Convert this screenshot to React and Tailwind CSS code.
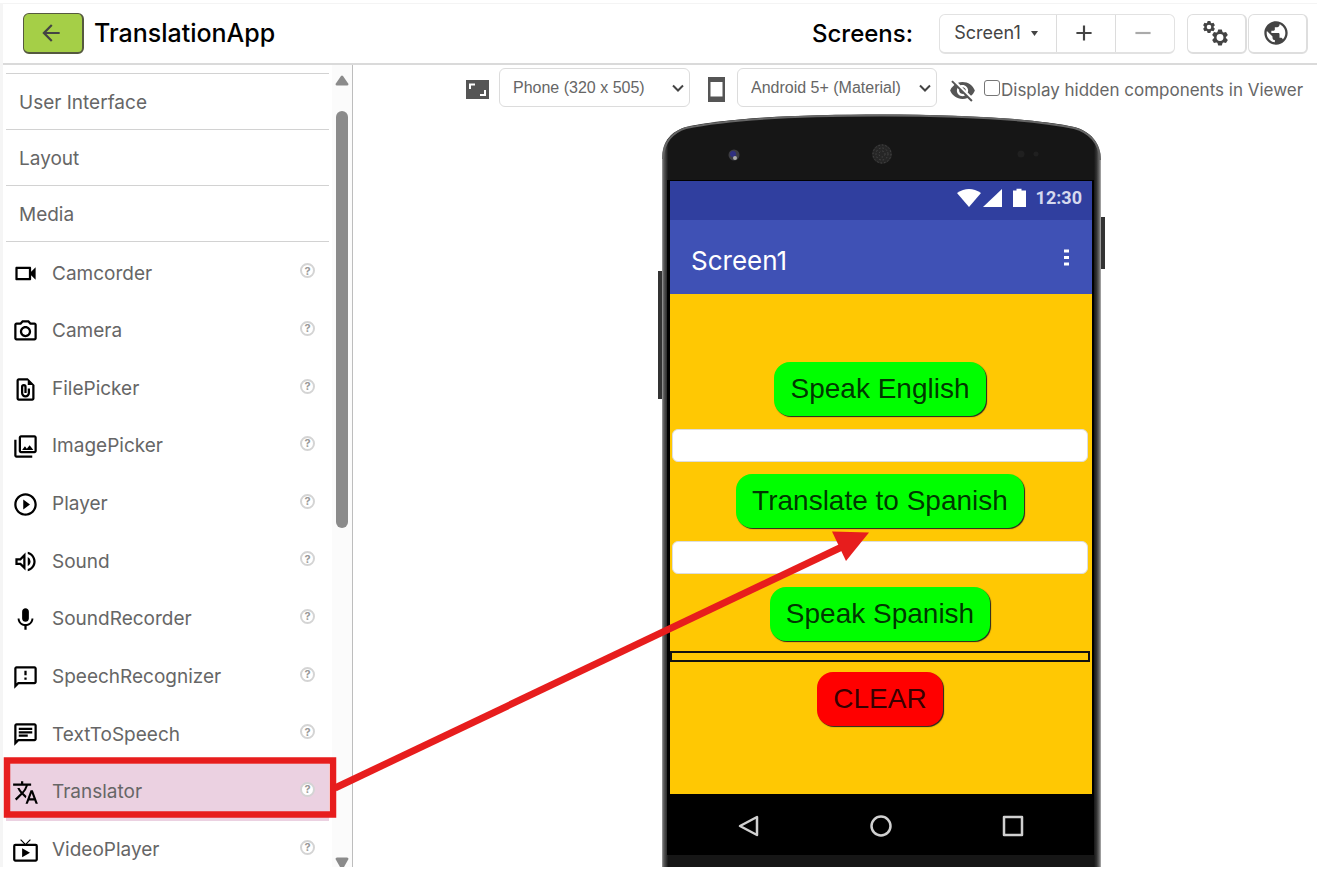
import React from "react";
import {
  MdArrowBack,
  MdPublic,
  MdVisibilityOff,
  MdOutlineVideocam,
  MdOutlinePhotoCamera,
  MdOutlineFilePresent,
  MdOutlinePhotoLibrary,
  MdPlayCircleOutline,
  MdOutlineVolumeUp,
  MdMic,
  MdOutlineFeedback,
  MdOutlineChat,
  MdTranslate,
  MdLiveTv,
  MdAdd,
  MdRemove,
} from "react-icons/md";

const categories = ["User Interface", "Layout", "Media"];

const components = [
  { name: "Camcorder", Icon: MdOutlineVideocam },
  { name: "Camera", Icon: MdOutlinePhotoCamera },
  { name: "FilePicker", Icon: MdOutlineFilePresent },
  { name: "ImagePicker", Icon: MdOutlinePhotoLibrary },
  { name: "Player", Icon: MdPlayCircleOutline },
  { name: "Sound", Icon: MdOutlineVolumeUp },
  { name: "SoundRecorder", Icon: MdMic },
  { name: "SpeechRecognizer", Icon: MdOutlineFeedback },
  { name: "TextToSpeech", Icon: MdOutlineChat },
  { name: "Translator", Icon: MdTranslate, selected: true },
  { name: "VideoPlayer", Icon: MdLiveTv },
];

function Gear({ x, y, r, hole }) {
  return (
    <g transform={`translate(${x} ${y})`}>
      <circle r={(r * 0.72 + hole) / 2} fill="none" stroke="currentColor" strokeWidth={r * 0.76 - hole} />
      {[0, 60, 120, 180, 240, 300].map((angle) => (
        <path
          key={angle}
          transform={`rotate(${angle}) scale(${r / 8})`}
          d="M-1.800 -8H1.800L2.800 -4.800H-2.800Z"
          fill="currentColor"
        />
      ))}
    </g>
  );
}

function Header() {
  return (
    <header className="flex h-[62px] shrink-0 items-center border-t border-b-2 border-t-[#f4f4f4] border-b-[#dadada] pr-[9px] pl-5">
      <button
        aria-label="Back"
        className="flex h-[41px] w-[61px] items-center justify-center rounded-md border border-r-2 border-b-2 border-[#55593f] bg-[#a5cf47] pb-px pr-1 text-[#444]"
      >
        <MdArrowBack size={26} />
      </button>
      <h1 className="ml-[10px] text-[25px] font-medium text-black">TranslationApp</h1>
      <span className="mr-[26px] ml-auto text-2xl font-medium text-black">Screens:</span>
      <div className="flex h-10 rounded-md border border-b-2 border-[#e2e2e2] text-[#444]">
        <button className="flex w-[117px] items-center justify-center gap-[10px] border-r border-[#dcdcdc] pr-1 text-lg">
          Screen1
          <svg width="7" height="5" viewBox="0 0 7 5" fill="currentColor" aria-hidden="true">
            <path d="M0 0h7L3.500 5z" />
          </svg>
        </button>
        <button
          aria-label="Add screen"
          className="flex w-[59px] items-center justify-center border-r border-[#dcdcdc] pr-1"
        >
          <MdAdd size={26} />
        </button>
        <button aria-label="Remove screen" className="flex w-[58px] items-center justify-center pr-1 text-[#aaa]">
          <MdRemove size={26} />
        </button>
      </div>
      <button
        aria-label="Project settings"
        className="ml-3 flex h-10 w-[60px] items-center justify-center rounded-md border border-r-2 border-b-2 border-[#dedede] pr-1 text-[#444]"
      >
        <svg width="26" height="26" viewBox="0 0 26 26" aria-hidden="true">
          <Gear x={7} y={7} r={6} hole={2.4} />
          <Gear x={18} y={17.5} r={8} hole={3.6} />
        </svg>
      </button>
      <button
        aria-label="Language"
        className="ml-px flex h-10 w-[60px] items-center justify-center rounded-md border border-r-2 border-b-2 border-[#dedede] pr-1 text-[#444]"
      >
        <MdPublic size={28} />
      </button>
    </header>
  );
}

function Palette() {
  return (
    <aside className="relative flex w-[350px] shrink-0 overflow-hidden border-r border-[#bdbdbd]">
      <div className="ml-[3px] w-[323px] shrink-0 pt-2">
        {categories.map((name) => (
          <button
            key={name}
            className="flex h-14 w-full items-center border-t border-[#d2d2d2] px-[13px] pt-1 text-left text-[19px] text-[#666]"
          >
            {name}
          </button>
        ))}
        <ul className="grid h-[638px] auto-rows-fr border-t border-[#d2d2d2] pt-[3px]">
          {components.map(({ name, Icon, selected }) => (
            <li key={name} className={selected ? "flex items-center bg-[#ebd1e1]" : "flex items-center"}>
              <button className="flex flex-1 items-center gap-[13px] pl-[6px] text-left text-[19px] text-[#666]">
                <Icon size={27} className="text-black" aria-hidden="true" />
                {name}
              </button>
              <button
                aria-label={"Help for " + name}
                className="mr-[14px] mb-[6px] flex size-[15px] items-center justify-center rounded-full border-2 border-[#d4d4d4] bg-white text-[11px] font-bold text-[#999]"
              >
                ?
              </button>
            </li>
          ))}
        </ul>
      </div>
      <div className="ml-[3px] flex flex-1 flex-col items-center bg-[#fbfbfb] pt-[10px]" aria-hidden="true">
        <svg width="14" height="11" viewBox="0 0 14 11" fill="#8b8b8b">
          <path d="M6 1Q7 0 8 1L13.500 9Q13.500 10.500 12 10.500H2Q.5 10.500.5 9Z" />
        </svg>
        <div className="mt-[25px] h-[417px] w-3 shrink-0 rounded-full bg-[#8b8b8b]" />
        <svg className="mt-auto" width="14" height="10" viewBox="0 0 14 10" fill="#8b8b8b">
          <path d="M.5 2Q.5.5 2 .5H12Q13.500.5 13.500 2L9 10H5Z" />
        </svg>
      </div>
    </aside>
  );
}

function SelectBox({ label, value, className }) {
  return (
    <div className={"relative " + className}>
      <select
        aria-label={label}
        className="h-[39px] w-full appearance-none rounded-md border border-[#dcdcdc] bg-white pr-8 pl-[13px] font-['Liberation_Sans',sans-serif] text-base text-[#666]"
      >
        <option>{value}</option>
      </select>
      <svg
        className="pointer-events-none absolute top-4 right-[6px]"
        width="12"
        height="9"
        viewBox="0 0 12 9"
        fill="none"
        stroke="#444"
        strokeWidth="2"
        aria-hidden="true"
      >
        <path d="M1 1.500l5 5 5-5" />
      </svg>
    </div>
  );
}

function ViewerToolbar() {
  return (
    <div className="flex h-[45px] items-center pl-[113px] text-[#555]">
      <svg className="mt-[3px] shrink-0" width="23" height="19" viewBox="0 0 23 19" aria-hidden="true">
        <path d="M0 0h23v19H0z" fill="#555" />
        <path d="M4 9V4.500h5M19 10v5h-5" fill="none" stroke="#fff" strokeWidth="2" />
      </svg>
      <SelectBox label="Screen size" value="Phone (320 x 505)" className="ml-[10px] w-[191px] shrink-0" />
      <svg className="mt-[3px] ml-[18px] shrink-0" width="17" height="25" viewBox="0 0 17 25" aria-hidden="true">
        <path fillRule="evenodd" d="M0 0h17v25H0zM2.500 5v14.500h12V5z" fill="#555" />
      </svg>
      <SelectBox label="Theme" value="Android 5+ (Material)" className="ml-3 w-[200px] shrink-0" />
      <MdVisibilityOff size={27} className="mt-[5px] ml-3 shrink-0" aria-hidden="true" />
      <input
        id="show-hidden"
        type="checkbox"
        className="ml-2 size-4 shrink-0 appearance-none rounded-[3px] border border-[#767676] bg-white"
      />
      <label htmlFor="show-hidden" className="mt-[6px] ml-px whitespace-nowrap text-[17px] text-[#666]">
        Display hidden components in Viewer
      </label>
    </div>
  );
}

function PhoneShell() {
  return (
    <svg className="absolute top-0 left-0" width="448" height="760" viewBox="0 0 448 760" aria-hidden="true">
      <defs>
        <linearGradient id="edge" x1="0" x2="1" y1="0" y2="0">
          <stop offset="0" stopColor="#a0a0a0" />
          <stop offset="0.004" stopColor="#5a5a5a" />
          <stop offset="0.01" stopColor="#333" />
          <stop offset="0.014" stopColor="#161616" />
          <stop offset="0.984" stopColor="#161616" />
          <stop offset="0.99" stopColor="#333" />
          <stop offset="0.996" stopColor="#6a6a6a" />
          <stop offset="1" stopColor="#b0b0b0" />
        </linearGradient>
      </defs>
      <path d="M0 158h5v128H0zM443 104h4v52h-4z" fill="#333" />
      <path
        d="M4 760V45C4 28 14 18 28 14C75 4 150 1.500 223 1.500S372 5 416 14C432 18 443 30 443 47V760Z"
        fill="url(#edge)"
      />
      <path
        d="M5 46C5 29 15 19 28 15C75 5 150 2.500 223 2.500S372 6 416 15C431 19 442 30 442 47"
        fill="none"
        stroke="#666"
        strokeWidth="2"
      />
      <circle cx="76" cy="42" r="5.500" fill="#3c3c42" />
      <circle cx="75" cy="41" r="3" fill="#303080" />
      <circle cx="77" cy="45" r="2" fill="#aaa" />
      <circle cx="224" cy="41" r="10" fill="#262626" />
      <g fill="none" stroke="#484848" strokeDasharray="1.500 2">
        <circle cx="224" cy="41" r="9" />
        <circle cx="224" cy="41" r="6" />
        <circle cx="224" cy="41" r="3" />
      </g>
      <circle cx="363" cy="41" r="3.500" fill="#202020" />
      <circle cx="378" cy="41" r="2.500" fill="#202020" />
      <path d="M9 67h427v675H9z" fill="#000" />
    </svg>
  );
}

const appButton =
  "rounded-2xl px-4 font-['Liberation_Sans',sans-serif] text-[28px] leading-[54px] text-black/80 shadow-[1px_1px_1px_#222]";
const appField = "h-[33px] w-[416px] rounded-md border border-[#ddd] bg-white px-2";

function Phone() {
  return (
    <div className="relative ml-[305px] w-[448px] shrink-0">
      <PhoneShell />
      <div className="relative mt-[68px] ml-3 flex w-[422px] flex-col">
        <div className="flex h-[39px] items-center justify-end bg-[#303f9f] pr-[10px] pb-[6px] text-white">
          <svg width="70" height="20" viewBox="0 0 70 20" fill="#fff" aria-hidden="true">
            <path d="M0 5Q12 -3 24 5L12 19Z" />
            <path d="M45 1v18H26Z" />
            <path d="M56 2.500h3.500V.8h5v1.700H69V19H56Z" />
          </svg>
          <span className="ml-[9px] font-[Roboto,sans-serif] text-lg font-bold text-[#d5d9ee]">12:30</span>
        </div>
        <div className="flex h-[74px] items-center justify-between bg-[#3f51b5] pr-[23px] pl-[21px] text-white">
          <span className="pt-[6px] text-[26px]">Screen1</span>
          <button aria-label="Menu">
            <svg width="5" height="17" viewBox="0 0 5 17" fill="#fff">
              <path d="M0 .5h5v3H0zM0 7h5v3H0zM0 13.500h5v3H0z" />
            </svg>
          </button>
        </div>
        <div className="flex h-[500px] flex-col items-center bg-[#ffc803] pt-[68px] pr-[2px]">
          <button className={appButton + " bg-[#00ff00]"}>Speak English</button>
          <input aria-label="English text" className={appField + " mt-[13px]"} />
          <button className={appButton + " mt-[12px] bg-[#00ff00]"}>Translate to Spanish</button>
          <input aria-label="Spanish text" className={appField + " mt-[13px]"} />
          <button className={appButton + " mt-[13px] bg-[#00ff00]"}>Speak Spanish</button>
          <div className="mt-[10px] h-[11px] w-full shrink-0 border-2 border-[#111]" />
          <button className={appButton + " mt-[10px] bg-[#ff0000]"}>CLEAR</button>
        </div>
        <nav className="flex h-[61px] items-center justify-center gap-[110px] pt-[2px]">
          {[
            ["Back", "M19 2v18L2 11Z"],
            ["Home", "M20.500 11a9.500 9.500 0 1 1-19 0a9.500 9.500 0 1 1 19 0Z"],
            ["Recent apps", "M2 2h18v18H2Z"],
          ].map(([name, d]) => (
            <button key={name} aria-label={name}>
              <svg
                width="22"
                height="22"
                viewBox="0 0 22 22"
                fill="none"
                stroke="#d0d0d0"
                strokeWidth="2.500"
                strokeLinejoin="round"
              >
                <path d={d} />
              </svg>
            </button>
          ))}
        </nav>
      </div>
    </div>
  );
}

function Annotation() {
  return (
    <svg
      className="pointer-events-none absolute top-0 left-0"
      width="880"
      height="830"
      viewBox="0 0 880 830"
      aria-hidden="true"
    >
      <rect x="7" y="760.500" width="326" height="54" fill="none" stroke="#e71d1d" strokeWidth="6.500" />
      <path d="M335 788L846 545" stroke="#e71d1d" strokeWidth="7" />
      <path d="M832 531.500L869 532.500L846 561Z" fill="#e71d1d" />
    </svg>
  );
}

export default function App() {
  return (
    <div className="relative flex h-screen flex-col overflow-hidden bg-white pt-[3px] pb-6 font-[Inter,sans-serif]">
      <div className="flex min-h-0 flex-1 flex-col border-l-3 border-[#f5f5f5]">
        <Header />
        <div className="flex min-h-0 flex-1">
          <Palette />
          <main className="flex min-w-0 flex-1 flex-col overflow-hidden">
            <ViewerToolbar />
            <div className="flex min-h-0 flex-1 overflow-hidden pt-[3px]">
              <Phone />
            </div>
          </main>
        </div>
      </div>
      <Annotation />
    </div>
  );
}
